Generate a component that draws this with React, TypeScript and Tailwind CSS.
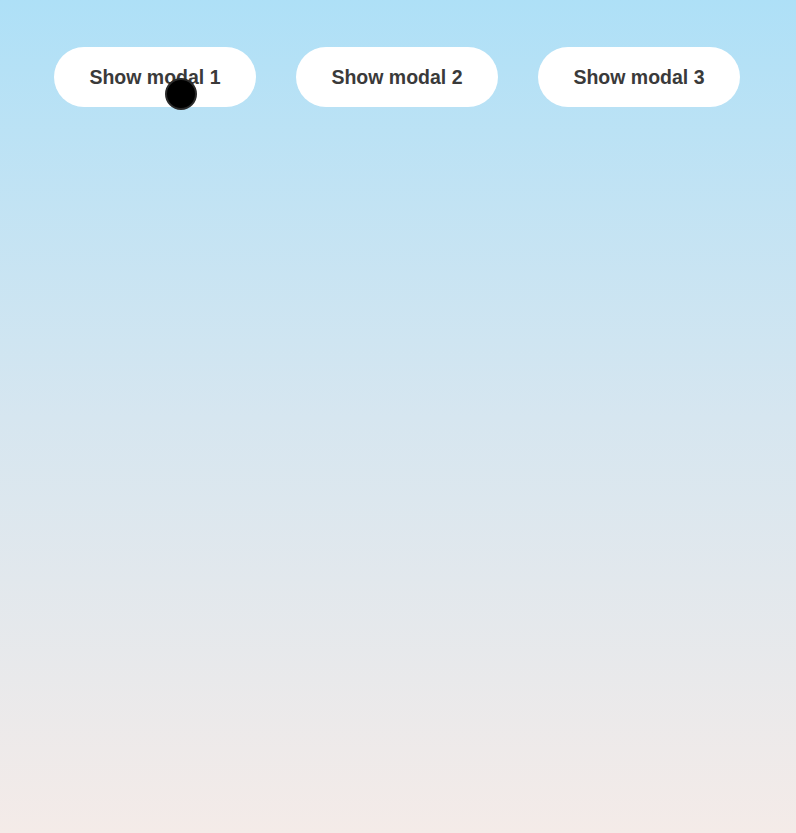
export default function App() {
  const labels = ['Show modal 1', 'Show modal 2', 'Show modal 3'];
  return (
    <div className="relative min-h-[833px] w-full bg-gradient-to-b from-[#aee0f7] via-[#d6e6f0] to-[#f4ebe8] font-['Liberation_Sans',Arial,sans-serif]">
      <div className="flex justify-center gap-10 pt-[47px] pr-[2px]">
        {labels.map((label) => (
          <button
            key={label}
            className="h-[60px] w-[202px] rounded-full bg-white pt-[1px] text-[19.5px] font-bold text-[#3a3a3a]"
          >
            {label}
          </button>
        ))}
      </div>
      {/* pointer indicator */}
      <div className="absolute left-[165px] top-[78px] h-[32px] w-[32px] rounded-full border-2 border-[#2a2a2a] bg-black" />
    </div>
  );
}
